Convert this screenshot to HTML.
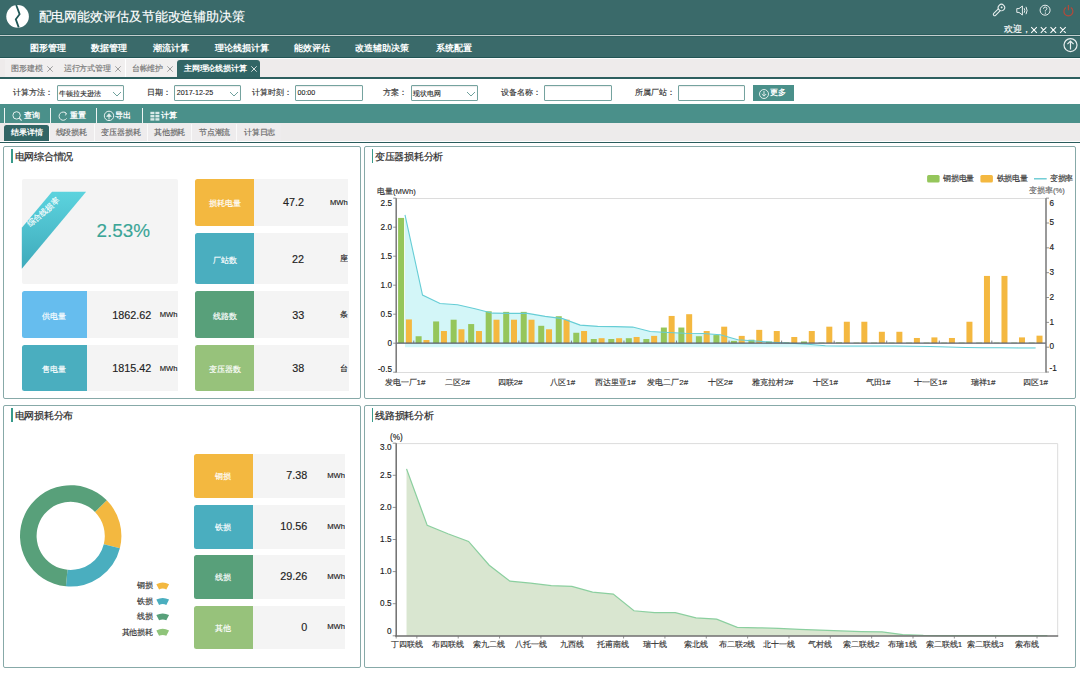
<!DOCTYPE html>
<html><head><meta charset="utf-8"><style>
html,body{margin:0;padding:0;background:#fff;}
body{width:1080px;height:675px;position:relative;overflow:hidden;font-family:'Liberation Sans',sans-serif;}
.t{position:absolute;white-space:nowrap;-webkit-text-stroke-width:0.15px;}
</style></head><body>
<div style="position:absolute;left:0;top:0;width:1080px;height:35px;background:#3a6a6a"></div>
<div style="position:absolute;left:0;top:34.3px;width:1080px;height:0.8px;background:#2a5c5c"></div>
<div style="position:absolute;left:0;top:35.1px;width:1080px;height:1.2px;background:#c4cfcf"></div>
<div style="position:absolute;left:0;top:36.3px;width:1080px;height:21.5px;background:#3a6a6a"></div>
<div style="position:absolute;left:0;top:36.3px;width:1080px;height:0.8px;background:#2f6060"></div>
<div style="position:absolute;left:0;top:56.9px;width:1080px;height:0.9px;background:#215454"></div>
<div style="position:absolute;left:0;top:57.8px;width:1080px;height:1.4px;background:#fbfbfb"></div>
<div style="position:absolute;left:0;top:59.2px;width:1080px;height:17.8px;background:#eeebeb"></div>
<div style="position:absolute;left:0;top:77px;width:1080px;height:1.5px;background:#2e5f5f"></div>
<svg style="position:absolute;left:0;top:0" width="40" height="35" viewBox="0 0 40 35">
<circle cx="17.6" cy="16.4" r="11.3" fill="#fff"/>
<path d="M16.2 5.0 L19.6 14.2 L15.8 19.3 L18.7 27.4" fill="none" stroke="#1f5757" stroke-width="1.8" stroke-linejoin="miter"/>
</svg>
<div class="t" style="left:38.5px;top:9.5px;font:13px/13px 'Liberation Sans',sans-serif;color:#fff;letter-spacing:-0.1px">配电网能效评估及节能改造辅助决策</div>

<svg style="position:absolute;left:985px;top:0" width="95" height="60" viewBox="985 0 95 60">
<g transform="translate(998.6 10.4) rotate(45)" stroke="#e4ecec" stroke-width="1.1" fill="#3a6a6a">
<path d="M-1.3 -1.6 V5.6 A1.3 1.3 0 0 0 1.3 5.6 V-1.6 Z"/>
<circle cx="0" cy="-4.0" r="3.2"/>
<circle cx="0" cy="-4.3" r="1.0" fill="#e4ecec" stroke="none"/>
</g>
<g fill="none" stroke="#e8eeee" stroke-width="1">
<path d="M1016.8 8.6 h2.2 l3.4 -2.6 v9 l-3.4 -2.6 h-2.2 z"/>
<path d="M1024.2 8.2 q1.2 2.3 0 4.6 M1026.0 6.8 q2.2 3.7 0 7.4"/>
<circle cx="1045.1" cy="10.2" r="5.0"/>
<path d="M1043.5 8.8 q0 -1.8 1.7 -1.8 q1.7 0 1.7 1.6 q0 1.2 -1.6 1.9 v1.0"/>
<circle cx="1045.3" cy="13.1" r="0.3" fill="#e8eeee"/>
<circle cx="1070.5" cy="45.1" r="6.5" stroke-width="1.2"/>
<path d="M1070.5 49.6 v-8.6 M1067.4 44.2 l3.1 -3.2 l3.1 3.2" stroke-width="1.2"/>
<path d="M1031.2 27.2 l5.6 5.6 M1036.8 27.2 l-5.6 5.6 M1040.8 27.2 l5.6 5.6 M1046.4 27.2 l-5.6 5.6 M1050.5 27.2 l5.6 5.6 M1056.1 27.2 l-5.6 5.6 M1060.1 27.2 l5.6 5.6 M1065.7 27.2 l-5.6 5.6" stroke="#fff" stroke-width="1.05"/>
</g>
<g fill="none" stroke="#b5493a" stroke-width="1.15">
<path d="M1066.0 7.6 A4.5 4.5 0 1 0 1070.8 7.6"/>
<path d="M1068.4 5.0 v5.2"/>
</g>
</svg>
<div class="t" style="left:1004px;top:25.4px;font:9px/9px 'Liberation Sans',sans-serif;color:#fff;">欢迎，</div>

<div class="t" style="left:29.5px;top:43.6px;font:bold 9px/9px 'Liberation Sans',sans-serif;color:#fff;-webkit-text-stroke-width:0;letter-spacing:0px">图形管理</div>

<div class="t" style="left:91px;top:43.6px;font:bold 9px/9px 'Liberation Sans',sans-serif;color:#fff;-webkit-text-stroke-width:0;letter-spacing:0px">数据管理</div>

<div class="t" style="left:153px;top:43.6px;font:bold 9px/9px 'Liberation Sans',sans-serif;color:#fff;-webkit-text-stroke-width:0;letter-spacing:0px">潮流计算</div>

<div class="t" style="left:214.5px;top:43.6px;font:bold 9px/9px 'Liberation Sans',sans-serif;color:#fff;-webkit-text-stroke-width:0;letter-spacing:0px">理论线损计算</div>

<div class="t" style="left:294px;top:43.6px;font:bold 9px/9px 'Liberation Sans',sans-serif;color:#fff;-webkit-text-stroke-width:0;letter-spacing:0px">能效评估</div>

<div class="t" style="left:355px;top:43.6px;font:bold 9px/9px 'Liberation Sans',sans-serif;color:#fff;-webkit-text-stroke-width:0;letter-spacing:0px">改造辅助决策</div>

<div class="t" style="left:436px;top:43.6px;font:bold 9px/9px 'Liberation Sans',sans-serif;color:#fff;-webkit-text-stroke-width:0;letter-spacing:0px">系统配置</div>

<div style="position:absolute;left:5px;top:59.2px;width:51.5px;height:17.8px;background:#f1efef;border-right:1px solid #fff"></div>
<div style="position:absolute;left:57px;top:59.2px;width:68px;height:17.8px;background:#f1efef;border-right:1px solid #fff"></div>
<div style="position:absolute;left:125.5px;top:59.2px;width:51px;height:17.8px;background:#f1efef"></div>
<div style="position:absolute;left:177px;top:60.3px;width:82.6px;height:17px;background:#316565;border-radius:3px 3px 0 0"></div>
<div class="t" style="left:11px;top:64.9px;font:8px/8px 'Liberation Sans',sans-serif;color:#777;letter-spacing:-0.15px">图形建模</div>

<svg style="position:absolute;left:47.3px;top:65.5px" width="6" height="6"><path d="M0.3 0.3 L5.7 5.7 M5.7 0.3 L0.3 5.7" stroke="#8a8a8a" stroke-width="0.8"/></svg>
<div class="t" style="left:63.8px;top:64.9px;font:8px/8px 'Liberation Sans',sans-serif;color:#777;letter-spacing:-0.15px">运行方式管理</div>

<svg style="position:absolute;left:115px;top:65.5px" width="6" height="6"><path d="M0.3 0.3 L5.7 5.7 M5.7 0.3 L0.3 5.7" stroke="#8a8a8a" stroke-width="0.8"/></svg>
<div class="t" style="left:131.8px;top:64.9px;font:8px/8px 'Liberation Sans',sans-serif;color:#777;letter-spacing:-0.15px">台帐维护</div>

<svg style="position:absolute;left:167.2px;top:65.5px" width="6" height="6"><path d="M0.3 0.3 L5.7 5.7 M5.7 0.3 L0.3 5.7" stroke="#8a8a8a" stroke-width="0.8"/></svg>
<div class="t" style="left:183.9px;top:64.9px;font:bold 8px/8px 'Liberation Sans',sans-serif;color:#fff;-webkit-text-stroke-width:0;letter-spacing:-0.15px">主网理论线损计算</div>

<svg style="position:absolute;left:250.6px;top:65.5px" width="6" height="6"><path d="M0.3 0.3 L5.7 5.7 M5.7 0.3 L0.3 5.7" stroke="#fff" stroke-width="0.8"/></svg>
<div class="t" style="left:13px;top:89.4px;font:7.9px/7.9px 'Liberation Sans',sans-serif;color:#333;">计算方法：</div>

<div style="position:absolute;left:56.5px;top:85.4px;width:65.3px;height:13.3px;border:1px solid #75a39f;border-radius:1px;background:#fff;box-shadow:inset 0 1px 1px rgba(0,0,0,0.08)"></div><div class="t" style="left:59.0px;top:89.9px;font:7px/7px 'Liberation Sans',sans-serif;color:#222;-webkit-text-stroke-width:0.1px">牛顿拉夫逊法</div>
<svg style="position:absolute;left:111.6px;top:90.6px" width="10" height="6"><path d="M1 1 L5 5 L9 1" fill="none" stroke="#5f9692" stroke-width="0.9"/></svg>
<div class="t" style="left:147px;top:89.4px;font:7.9px/7.9px 'Liberation Sans',sans-serif;color:#333;">日期：</div>

<div style="position:absolute;left:174.3px;top:85.4px;width:65.0px;height:13.3px;border:1px solid #75a39f;border-radius:1px;background:#fff;box-shadow:inset 0 1px 1px rgba(0,0,0,0.08)"></div><div class="t" style="left:176.8px;top:90.2px;font:7.1px/7.1px 'Liberation Sans',sans-serif;color:#222;-webkit-text-stroke-width:0.1px">2017-12-25</div>
<svg style="position:absolute;left:229.10000000000002px;top:90.6px" width="10" height="6"><path d="M1 1 L5 5 L9 1" fill="none" stroke="#5f9692" stroke-width="0.9"/></svg>
<div class="t" style="left:252px;top:89.4px;font:7.9px/7.9px 'Liberation Sans',sans-serif;color:#333;">计算时刻：</div>

<div style="position:absolute;left:295px;top:85.4px;width:65.5px;height:13.3px;border:1px solid #75a39f;border-radius:1px;background:#fff;box-shadow:inset 0 1px 1px rgba(0,0,0,0.08)"></div><div class="t" style="left:297.5px;top:90.2px;font:7.1px/7.1px 'Liberation Sans',sans-serif;color:#222;-webkit-text-stroke-width:0.1px">00:00</div>

<div class="t" style="left:383px;top:89.4px;font:7.9px/7.9px 'Liberation Sans',sans-serif;color:#333;">方案：</div>

<div style="position:absolute;left:410.8px;top:85.4px;width:65.19999999999999px;height:13.3px;border:1px solid #75a39f;border-radius:1px;background:#fff;box-shadow:inset 0 1px 1px rgba(0,0,0,0.08)"></div><div class="t" style="left:413.3px;top:89.9px;font:7px/7px 'Liberation Sans',sans-serif;color:#222;-webkit-text-stroke-width:0.1px">现状电网</div>
<svg style="position:absolute;left:465.8px;top:90.6px" width="10" height="6"><path d="M1 1 L5 5 L9 1" fill="none" stroke="#5f9692" stroke-width="0.9"/></svg>
<div class="t" style="left:501.3px;top:89.4px;font:7.9px/7.9px 'Liberation Sans',sans-serif;color:#333;">设备名称：</div>

<div style="position:absolute;left:544.2px;top:85.4px;width:65.79999999999995px;height:13.3px;border:1px solid #75a39f;border-radius:1px;background:#fff;box-shadow:inset 0 1px 1px rgba(0,0,0,0.08)"></div>
<div class="t" style="left:634.6px;top:89.4px;font:7.9px/7.9px 'Liberation Sans',sans-serif;color:#333;">所属厂站：</div>

<div style="position:absolute;left:678.1px;top:85.4px;width:65.29999999999995px;height:13.3px;border:1px solid #75a39f;border-radius:1px;background:#fff;box-shadow:inset 0 1px 1px rgba(0,0,0,0.08)"></div>
<div style="position:absolute;left:753.1px;top:85.4px;width:40.6px;height:15.4px;background:#4a908a"></div>
<svg style="position:absolute;left:757.7px;top:87.6px" width="12" height="12"><g fill="none" stroke="#eef5f4" stroke-width="0.9"><circle cx="6" cy="6" r="4.5"/><path d="M6 3.0 v4.8 M3.8 6.0 l2.2 2.2 l2.2 -2.2"/></g></svg>
<div class="t" style="left:769.8px;top:89.4px;font:bold 8.2px/8.2px 'Liberation Sans',sans-serif;color:#fff;-webkit-text-stroke-width:0;">更多</div>

<div style="position:absolute;left:0;top:104px;width:1080px;height:19px;background:#4a908a"></div>
<div style="position:absolute;left:4.4px;top:107.9px;width:1px;height:15px;background:#eef4f3"></div>
<div style="position:absolute;left:50.0px;top:107.9px;width:1px;height:15px;background:#eef4f3"></div>
<div style="position:absolute;left:95.9px;top:107.9px;width:1px;height:15px;background:#eef4f3"></div>
<div style="position:absolute;left:141.7px;top:107.9px;width:1px;height:15px;background:#eef4f3"></div>
<svg style="position:absolute;left:0;top:104px" width="170" height="19" viewBox="0 104 170 19"><g fill="none" stroke="#e6f0ef" stroke-width="1">
<circle cx="16.6" cy="115.4" r="3.7"/><path d="M19.3 118.2 L21.6 120.6" stroke-width="1.2"/>
<path d="M66.2 113.4 A4.1 4.1 0 1 0 66.6 118.4"/><path d="M64.6 112.3 L66.5 113.5 L65.4 115.4"/>
<circle cx="109" cy="115.9" r="4.7"/><path d="M109 119.4 v-3.6"/><path d="M106.6 116.4 L109 113.6 L111.4 116.4 Z" fill="#e6f0ef" stroke-width="0.6"/>
</g><g fill="#d8e9e7">
<rect x="150.4" y="111.8" width="4" height="2.4"/><rect x="155.4" y="111.8" width="4" height="2.4"/>
<rect x="150.4" y="115.0" width="4" height="2.4"/><rect x="155.4" y="115.0" width="4" height="2.4"/>
<rect x="150.4" y="118.2" width="4" height="2.4"/><rect x="155.4" y="118.2" width="4" height="2.4"/>
</g></svg>
<div class="t" style="left:23.8px;top:112.4px;font:bold 8.1px/8.1px 'Liberation Sans',sans-serif;color:#fff;-webkit-text-stroke-width:0;">查询</div>

<div class="t" style="left:69.5px;top:112.4px;font:bold 8.1px/8.1px 'Liberation Sans',sans-serif;color:#fff;-webkit-text-stroke-width:0;">重置</div>

<div class="t" style="left:115.2px;top:112.4px;font:bold 8.1px/8.1px 'Liberation Sans',sans-serif;color:#fff;-webkit-text-stroke-width:0;">导出</div>

<div class="t" style="left:161px;top:112.4px;font:bold 8.1px/8.1px 'Liberation Sans',sans-serif;color:#fff;-webkit-text-stroke-width:0;">计算</div>

<div style="position:absolute;left:0;top:123px;width:1080px;height:17.6px;background:#edebeb"></div>
<div style="position:absolute;left:0;top:141.5px;width:1080px;height:1.4px;background:#2a5c5c"></div>
<div style="position:absolute;left:280.3px;top:123.8px;width:1px;height:16.8px;background:#fafafa"></div>
<div style="position:absolute;left:279.3px;top:123.8px;width:1px;height:16.8px;background:#e2e0e0"></div>
<div style="position:absolute;left:4.3px;top:124.6px;width:44.5px;height:16.2px;background:#316565;border-radius:2.5px 2.5px 0 0"></div>
<div class="t" style="left:11.2px;top:128.8px;font:bold 8px/8px 'Liberation Sans',sans-serif;color:#fff;-webkit-text-stroke-width:0;letter-spacing:-0.1px">结果详情</div>

<div style="position:absolute;left:48.8px;top:123.8px;width:44.0px;height:16.8px;background:#eeeced;border-left:1px solid #fafafa"></div>
<div class="t" style="left:55.5px;top:128.8px;font:8px/8px 'Liberation Sans',sans-serif;color:#666;letter-spacing:-0.1px">线段损耗</div>

<div style="position:absolute;left:93.8px;top:123.8px;width:52.2px;height:16.8px;background:#eeeced;border-left:1px solid #fafafa"></div>
<div class="t" style="left:101.3px;top:128.8px;font:8px/8px 'Liberation Sans',sans-serif;color:#666;letter-spacing:-0.1px">变压器损耗</div>

<div style="position:absolute;left:147px;top:123.8px;width:43.30000000000001px;height:16.8px;background:#eeeced;border-left:1px solid #fafafa"></div>
<div class="t" style="left:153.8px;top:128.8px;font:8px/8px 'Liberation Sans',sans-serif;color:#666;letter-spacing:-0.1px">其他损耗</div>

<div style="position:absolute;left:191.3px;top:123.8px;width:44.0px;height:16.8px;background:#eeeced;border-left:1px solid #fafafa"></div>
<div class="t" style="left:198.8px;top:128.8px;font:8px/8px 'Liberation Sans',sans-serif;color:#666;letter-spacing:-0.1px">节点潮流</div>

<div style="position:absolute;left:236.3px;top:123.8px;width:43.5px;height:16.8px;background:#eeeced;border-left:1px solid #fafafa"></div>
<div class="t" style="left:243.8px;top:128.8px;font:8px/8px 'Liberation Sans',sans-serif;color:#666;letter-spacing:-0.1px">计算日志</div>

<div style="position:absolute;left:3.2px;top:146.4px;width:355.5px;height:250.9px;border:1.3px solid #87a9a8;border-radius:2px;background:#fff"></div>
<div style="position:absolute;left:11.100000000000001px;top:148.8px;width:1.8px;height:13.8px;background:#389a8a"></div>
<div class="t" style="left:14.600000000000001px;top:151.70000000000002px;font:10px/10px 'Liberation Sans',sans-serif;color:#2a2a2a;letter-spacing:-0.25px;-webkit-text-stroke:0.2px #2a2a2a">电网综合情况</div>

<div style="position:absolute;left:363.6px;top:146.4px;width:710.9px;height:250.9px;border:1.3px solid #87a9a8;border-radius:2px;background:#fff"></div>
<div style="position:absolute;left:371.5px;top:148.8px;width:1.8px;height:13.8px;background:#389a8a"></div>
<div class="t" style="left:375.0px;top:151.70000000000002px;font:10px/10px 'Liberation Sans',sans-serif;color:#2a2a2a;letter-spacing:-0.3px;-webkit-text-stroke:0.2px #2a2a2a">变压器损耗分析</div>

<div style="position:absolute;left:3.2px;top:405.4px;width:355.5px;height:261.09999999999997px;border:1.3px solid #87a9a8;border-radius:2px;background:#fff"></div>
<div style="position:absolute;left:11.100000000000001px;top:407.79999999999995px;width:1.8px;height:13.8px;background:#389a8a"></div>
<div class="t" style="left:14.600000000000001px;top:410.7px;font:10px/10px 'Liberation Sans',sans-serif;color:#2a2a2a;letter-spacing:-0.25px;-webkit-text-stroke:0.2px #2a2a2a">电网损耗分布</div>

<div style="position:absolute;left:363.6px;top:405.4px;width:710.9px;height:261.09999999999997px;border:1.3px solid #87a9a8;border-radius:2px;background:#fff"></div>
<div style="position:absolute;left:371.5px;top:407.79999999999995px;width:1.8px;height:13.8px;background:#389a8a"></div>
<div class="t" style="left:375.0px;top:410.7px;font:10px/10px 'Liberation Sans',sans-serif;color:#2a2a2a;letter-spacing:-0.25px;-webkit-text-stroke:0.2px #2a2a2a">线路损耗分析</div>

<div style="position:absolute;left:21.8px;top:178.5px;width:156.5px;height:105.3px;background:#f4f4f4;border-radius:2px"></div>
<svg style="position:absolute;left:0;top:0" width="360" height="400" viewBox="0 0 360 400">
<defs><linearGradient id="rg" x1="0" y1="0" x2="0" y2="1"><stop offset="0" stop-color="#5cd3de"/><stop offset="1" stop-color="#3eaabb"/></linearGradient></defs>
<path d="M52 191.7 L86.1 191.7 L21.8 268.7 L21.8 227.8 Z" fill="url(#rg)"/>
</svg>
<div class="t" style="left:23.8px;top:209.0px;font:8px/8px 'Liberation Sans',sans-serif;color:#fff;width:39px;text-align:center;transform:rotate(-41deg);transform-origin:50% 50%;-webkit-text-stroke:0.15px #fff;">综合线损率</div>

<div class="t" style="left:96.6px;top:222.3px;font:18.9px/18.9px 'Liberation Sans',sans-serif;color:#3aa597;">2.53%</div>

<div style="position:absolute;left:254px;top:178.5px;width:94.30000000000001px;height:47.0px;background:#f4f4f4;overflow:hidden"><div class="t" style="right:44.30000000000001px;top:18.9px;font:10.8px/10.8px 'Liberation Sans',sans-serif;color:#222">47.2</div><div class="t" style="left:76px;top:20.5px;font:7.6px/7.6px 'Liberation Sans',sans-serif;color:#222">MWh</div></div>
<div style="position:absolute;left:195.3px;top:178.5px;width:58.69999999999999px;height:47.0px;background:#f3b840;border-radius:2.5px 0 0 2.5px"></div>
<div class="t" style="left:195.3px;width:58.69999999999999px;text-align:center;top:200.1px;font:8px/8px 'Liberation Sans',sans-serif;color:#fff;-webkit-text-stroke:0.15px #fff">损耗电量</div>
<div style="position:absolute;left:254px;top:232.6px;width:94.30000000000001px;height:51.599999999999994px;background:#f4f4f4;overflow:hidden"><div class="t" style="right:44.30000000000001px;top:21.199999999999996px;font:10.8px/10.8px 'Liberation Sans',sans-serif;color:#222">22</div><div class="t" style="left:85.69999999999999px;top:22.799999999999997px;font:7.6px/7.6px 'Liberation Sans',sans-serif;color:#222">座</div></div>
<div style="position:absolute;left:195.3px;top:232.6px;width:58.69999999999999px;height:51.599999999999994px;background:#4aaebf;border-radius:2.5px 0 0 2.5px"></div>
<div class="t" style="left:195.3px;width:58.69999999999999px;text-align:center;top:256.5px;font:8px/8px 'Liberation Sans',sans-serif;color:#fff;-webkit-text-stroke:0.15px #fff">厂站数</div>
<div style="position:absolute;left:254px;top:291px;width:94.60000000000002px;height:46.80000000000001px;background:#f4f4f4;overflow:hidden"><div class="t" style="right:44.30000000000001px;top:18.800000000000004px;font:10.8px/10.8px 'Liberation Sans',sans-serif;color:#222">33</div><div class="t" style="left:86px;top:20.400000000000006px;font:7.6px/7.6px 'Liberation Sans',sans-serif;color:#222">条</div></div>
<div style="position:absolute;left:195.3px;top:291px;width:58.69999999999999px;height:46.80000000000001px;background:#58a07a;border-radius:2.5px 0 0 2.5px"></div>
<div class="t" style="left:195.3px;width:58.69999999999999px;text-align:center;top:312.5px;font:8px/8px 'Liberation Sans',sans-serif;color:#fff;-webkit-text-stroke:0.15px #fff">线路数</div>
<div style="position:absolute;left:254px;top:344.6px;width:94.60000000000002px;height:46.299999999999955px;background:#f4f4f4;overflow:hidden"><div class="t" style="right:44.30000000000001px;top:18.549999999999976px;font:10.8px/10.8px 'Liberation Sans',sans-serif;color:#222">38</div><div class="t" style="left:86px;top:20.149999999999977px;font:7.6px/7.6px 'Liberation Sans',sans-serif;color:#222">台</div></div>
<div style="position:absolute;left:195.3px;top:344.6px;width:58.69999999999999px;height:46.299999999999955px;background:#97c27b;border-radius:2.5px 0 0 2.5px"></div>
<div class="t" style="left:195.3px;width:58.69999999999999px;text-align:center;top:365.85px;font:8px/8px 'Liberation Sans',sans-serif;color:#fff;-webkit-text-stroke:0.15px #fff">变压器数</div>
<div style="position:absolute;left:86.9px;top:291px;width:91.5px;height:46.80000000000001px;background:#f4f4f4;overflow:hidden"><div class="t" style="right:27.200000000000017px;top:18.800000000000004px;font:10.8px/10.8px 'Liberation Sans',sans-serif;color:#222">1862.62</div><div class="t" style="left:72.9px;top:20.400000000000006px;font:7.6px/7.6px 'Liberation Sans',sans-serif;color:#222">MWh</div></div>
<div style="position:absolute;left:21.8px;top:291px;width:65.10000000000001px;height:46.80000000000001px;background:#66bdee;border-radius:2.5px 0 0 2.5px"></div>
<div class="t" style="left:21.8px;width:65.10000000000001px;text-align:center;top:312.5px;font:8px/8px 'Liberation Sans',sans-serif;color:#fff;-webkit-text-stroke:0.15px #fff">供电量</div>
<div style="position:absolute;left:86.9px;top:344.6px;width:91.5px;height:46.299999999999955px;background:#f4f4f4;overflow:hidden"><div class="t" style="right:27.200000000000017px;top:18.549999999999976px;font:10.8px/10.8px 'Liberation Sans',sans-serif;color:#222">1815.42</div><div class="t" style="left:72.9px;top:20.149999999999977px;font:7.6px/7.6px 'Liberation Sans',sans-serif;color:#222">MWh</div></div>
<div style="position:absolute;left:21.8px;top:344.6px;width:65.10000000000001px;height:46.299999999999955px;background:#4aaebf;border-radius:2.5px 0 0 2.5px"></div>
<div class="t" style="left:21.8px;width:65.10000000000001px;text-align:center;top:365.85px;font:8px/8px 'Liberation Sans',sans-serif;color:#fff;-webkit-text-stroke:0.15px #fff">售电量</div>
<div style="position:absolute;left:252.8px;top:454.3px;width:92.69999999999999px;height:43.5px;background:#f4f4f4;overflow:hidden"><div class="t" style="right:38.19999999999999px;top:16.15px;font:10.8px/10.8px 'Liberation Sans',sans-serif;color:#222">7.38</div><div class="t" style="left:74.5px;top:17.75px;font:7.6px/7.6px 'Liberation Sans',sans-serif;color:#222">MWh</div></div>
<div style="position:absolute;left:193.5px;top:454.3px;width:59.30000000000001px;height:43.5px;background:#f3b840;border-radius:2.5px 0 0 2.5px"></div>
<div class="t" style="left:193.5px;width:59.30000000000001px;text-align:center;top:473.15000000000003px;font:8px/8px 'Liberation Sans',sans-serif;color:#fff;-webkit-text-stroke:0.15px #fff">铜损</div>
<div style="position:absolute;left:252.8px;top:504.8px;width:92.69999999999999px;height:43.80000000000001px;background:#f4f4f4;overflow:hidden"><div class="t" style="right:38.19999999999999px;top:16.300000000000004px;font:10.8px/10.8px 'Liberation Sans',sans-serif;color:#222">10.56</div><div class="t" style="left:74.5px;top:17.900000000000006px;font:7.6px/7.6px 'Liberation Sans',sans-serif;color:#222">MWh</div></div>
<div style="position:absolute;left:193.5px;top:504.8px;width:59.30000000000001px;height:43.80000000000001px;background:#4aaebf;border-radius:2.5px 0 0 2.5px"></div>
<div class="t" style="left:193.5px;width:59.30000000000001px;text-align:center;top:523.8000000000001px;font:8px/8px 'Liberation Sans',sans-serif;color:#fff;-webkit-text-stroke:0.15px #fff">铁损</div>
<div style="position:absolute;left:252.8px;top:555.4px;width:92.69999999999999px;height:43.39999999999998px;background:#f4f4f4;overflow:hidden"><div class="t" style="right:38.19999999999999px;top:16.099999999999987px;font:10.8px/10.8px 'Liberation Sans',sans-serif;color:#222">29.26</div><div class="t" style="left:74.5px;top:17.69999999999999px;font:7.6px/7.6px 'Liberation Sans',sans-serif;color:#222">MWh</div></div>
<div style="position:absolute;left:193.5px;top:555.4px;width:59.30000000000001px;height:43.39999999999998px;background:#58a07a;border-radius:2.5px 0 0 2.5px"></div>
<div class="t" style="left:193.5px;width:59.30000000000001px;text-align:center;top:574.1999999999999px;font:8px/8px 'Liberation Sans',sans-serif;color:#fff;-webkit-text-stroke:0.15px #fff">线损</div>
<div style="position:absolute;left:252.8px;top:605.6px;width:92.69999999999999px;height:43.60000000000002px;background:#f4f4f4;overflow:hidden"><div class="t" style="right:38.19999999999999px;top:16.20000000000001px;font:10.8px/10.8px 'Liberation Sans',sans-serif;color:#222">0</div><div class="t" style="left:74.5px;top:17.80000000000001px;font:7.6px/7.6px 'Liberation Sans',sans-serif;color:#222">MWh</div></div>
<div style="position:absolute;left:193.5px;top:605.6px;width:59.30000000000001px;height:43.60000000000002px;background:#97c27b;border-radius:2.5px 0 0 2.5px"></div>
<div class="t" style="left:193.5px;width:59.30000000000001px;text-align:center;top:624.5000000000001px;font:8px/8px 'Liberation Sans',sans-serif;color:#fff;-webkit-text-stroke:0.15px #fff">其他</div>
<svg style="position:absolute;left:0;top:400px" width="360" height="275" viewBox="0 400 360 275"><path d="M106.80 500.30 A50.7 50.7 0 0 1 119.89 548.17 L103.79 544.15 A34.1 34.1 0 0 0 94.98 511.96 Z" fill="#f3b840"/><path d="M119.89 548.17 A50.7 50.7 0 0 1 65.93 586.37 L67.49 569.85 A34.1 34.1 0 0 0 103.79 544.15 Z" fill="#4aaebf"/><path d="M65.93 586.37 A50.7 50.7 0 1 1 106.80 500.30 L94.98 511.96 A34.1 34.1 0 1 0 67.49 569.85 Z" fill="#58a07a"/><path d="M156.34 584.13 A14 14 0 0 1 169.06 584.13 L166.33 589.47 A8 8 0 0 0 159.07 589.47 Z" fill="#f3b840"/><path d="M156.34 599.58 A14 14 0 0 1 169.06 599.58 L166.33 604.9200000000001 A8 8 0 0 0 159.07 604.9200000000001 Z" fill="#4aaebf"/><path d="M156.34 615.03 A14 14 0 0 1 169.06 615.03 L166.33 620.37 A8 8 0 0 0 159.07 620.37 Z" fill="#58a07a"/><path d="M156.34 630.48 A14 14 0 0 1 169.06 630.48 L166.33 635.82 A8 8 0 0 0 159.07 635.82 Z" fill="#8fc47a"/></svg>
<div class="t" style="right:927.2px;top:582.3px;font:8px/8px 'Liberation Sans',sans-serif;color:#333;letter-spacing:-0.2px">铜损</div>
<div class="t" style="right:927.2px;top:597.6999999999999px;font:8px/8px 'Liberation Sans',sans-serif;color:#333;letter-spacing:-0.2px">铁损</div>
<div class="t" style="right:927.2px;top:613.0999999999999px;font:8px/8px 'Liberation Sans',sans-serif;color:#333;letter-spacing:-0.2px">线损</div>
<div class="t" style="right:927.2px;top:628.5px;font:8px/8px 'Liberation Sans',sans-serif;color:#333;letter-spacing:-0.2px">其他损耗</div>
<svg style="position:absolute;left:0;top:0" width="1080" height="400" viewBox="0 0 1080 400"><line x1="396.2" y1="198.5" x2="1046.0" y2="198.5" stroke="#dcdcdc" stroke-width="1"/><line x1="396.2" y1="372.5" x2="1046.0" y2="372.5" stroke="#dcdcdc" stroke-width="1"/><polygon points="405.00,347.20 405.00,214.80 422.52,295.04 440.03,303.48 457.55,304.72 475.07,308.70 492.58,313.17 510.10,313.42 527.62,313.42 545.13,316.40 562.65,318.63 580.17,325.09 597.69,326.33 615.20,326.58 632.72,327.08 650.24,331.55 667.75,332.54 685.27,333.29 702.79,333.54 720.30,334.78 737.82,339.75 755.34,340.99 772.86,342.23 790.37,343.23 807.89,344.22 825.41,345.71 842.92,345.96 860.44,345.96 877.96,345.96 895.47,345.96 912.99,346.21 930.51,346.45 948.03,346.95 965.54,347.45 983.06,347.70 1000.58,347.70 1018.09,347.95 1035.61,348.07 1035.61,347.20" fill="#d3f6f8"/><rect x="398.10" y="217.92" width="6" height="125.28" fill="#95c65b"/><rect x="405.90" y="319.42" width="6" height="23.78" fill="#f4b840"/><rect x="415.62" y="336.24" width="6" height="6.96" fill="#95c65b"/><rect x="423.42" y="340.01" width="6" height="3.19" fill="#f4b840"/><rect x="433.13" y="321.45" width="6" height="21.75" fill="#95c65b"/><rect x="440.93" y="331.02" width="6" height="12.18" fill="#f4b840"/><rect x="450.65" y="319.71" width="6" height="23.49" fill="#95c65b"/><rect x="458.45" y="329.28" width="6" height="13.92" fill="#f4b840"/><rect x="468.17" y="324.06" width="6" height="19.14" fill="#95c65b"/><rect x="475.97" y="331.02" width="6" height="12.18" fill="#f4b840"/><rect x="485.68" y="311.30" width="6" height="31.90" fill="#95c65b"/><rect x="493.48" y="319.71" width="6" height="23.49" fill="#f4b840"/><rect x="503.20" y="311.88" width="6" height="31.32" fill="#95c65b"/><rect x="511.00" y="319.71" width="6" height="23.49" fill="#f4b840"/><rect x="520.72" y="311.88" width="6" height="31.32" fill="#95c65b"/><rect x="528.52" y="319.71" width="6" height="23.49" fill="#f4b840"/><rect x="538.23" y="325.80" width="6" height="17.40" fill="#95c65b"/><rect x="546.03" y="329.28" width="6" height="13.92" fill="#f4b840"/><rect x="555.75" y="316.23" width="6" height="26.97" fill="#95c65b"/><rect x="563.55" y="319.71" width="6" height="23.49" fill="#f4b840"/><rect x="573.27" y="332.76" width="6" height="10.44" fill="#95c65b"/><rect x="581.07" y="331.02" width="6" height="12.18" fill="#f4b840"/><rect x="590.79" y="339.02" width="6" height="4.18" fill="#95c65b"/><rect x="598.59" y="338.21" width="6" height="4.99" fill="#f4b840"/><rect x="608.30" y="339.02" width="6" height="4.18" fill="#95c65b"/><rect x="616.10" y="338.21" width="6" height="4.99" fill="#f4b840"/><rect x="625.82" y="338.21" width="6" height="4.99" fill="#95c65b"/><rect x="633.62" y="336.99" width="6" height="6.21" fill="#f4b840"/><rect x="643.34" y="339.02" width="6" height="4.18" fill="#95c65b"/><rect x="651.14" y="335.89" width="6" height="7.31" fill="#f4b840"/><rect x="660.85" y="327.54" width="6" height="15.66" fill="#95c65b"/><rect x="668.65" y="315.94" width="6" height="27.26" fill="#f4b840"/><rect x="678.37" y="327.54" width="6" height="15.66" fill="#95c65b"/><rect x="686.17" y="314.20" width="6" height="29.00" fill="#f4b840"/><rect x="695.89" y="336.24" width="6" height="6.96" fill="#95c65b"/><rect x="703.69" y="331.02" width="6" height="12.18" fill="#f4b840"/><rect x="713.40" y="335.08" width="6" height="8.12" fill="#95c65b"/><rect x="721.20" y="326.67" width="6" height="16.53" fill="#f4b840"/><rect x="730.92" y="340.88" width="6" height="2.32" fill="#95c65b"/><rect x="738.72" y="335.89" width="6" height="7.31" fill="#f4b840"/><rect x="748.44" y="339.72" width="6" height="3.48" fill="#95c65b"/><rect x="756.24" y="329.86" width="6" height="13.34" fill="#f4b840"/><rect x="765.96" y="341.46" width="6" height="1.74" fill="#95c65b"/><rect x="773.76" y="331.02" width="6" height="12.18" fill="#f4b840"/><rect x="783.47" y="342.33" width="6" height="0.87" fill="#95c65b"/><rect x="791.27" y="336.99" width="6" height="6.21" fill="#f4b840"/><rect x="800.99" y="341.46" width="6" height="1.74" fill="#95c65b"/><rect x="808.79" y="331.02" width="6" height="12.18" fill="#f4b840"/><rect x="818.51" y="342.62" width="6" height="0.58" fill="#95c65b"/><rect x="826.31" y="326.67" width="6" height="16.53" fill="#f4b840"/><rect x="836.02" y="342.33" width="6" height="0.87" fill="#95c65b"/><rect x="843.82" y="321.74" width="6" height="21.46" fill="#f4b840"/><rect x="853.54" y="342.62" width="6" height="0.58" fill="#95c65b"/><rect x="861.34" y="321.74" width="6" height="21.46" fill="#f4b840"/><rect x="871.06" y="342.62" width="6" height="0.58" fill="#95c65b"/><rect x="878.86" y="331.77" width="6" height="11.43" fill="#f4b840"/><rect x="888.57" y="342.62" width="6" height="0.58" fill="#95c65b"/><rect x="896.37" y="331.77" width="6" height="11.43" fill="#f4b840"/><rect x="906.09" y="342.62" width="6" height="0.58" fill="#95c65b"/><rect x="913.89" y="337.98" width="6" height="5.22" fill="#f4b840"/><rect x="923.61" y="342.62" width="6" height="0.58" fill="#95c65b"/><rect x="931.41" y="337.40" width="6" height="5.80" fill="#f4b840"/><rect x="941.13" y="342.62" width="6" height="0.58" fill="#95c65b"/><rect x="948.93" y="337.98" width="6" height="5.22" fill="#f4b840"/><rect x="958.64" y="342.62" width="6" height="0.58" fill="#95c65b"/><rect x="966.44" y="321.74" width="6" height="21.46" fill="#f4b840"/><rect x="976.16" y="342.62" width="6" height="0.58" fill="#95c65b"/><rect x="983.96" y="275.92" width="6" height="67.28" fill="#f4b840"/><rect x="993.68" y="342.62" width="6" height="0.58" fill="#95c65b"/><rect x="1001.48" y="275.92" width="6" height="67.28" fill="#f4b840"/><rect x="1011.19" y="342.62" width="6" height="0.58" fill="#95c65b"/><rect x="1018.99" y="337.40" width="6" height="5.80" fill="#f4b840"/><rect x="1028.71" y="342.62" width="6" height="0.58" fill="#95c65b"/><rect x="1036.51" y="335.66" width="6" height="7.54" fill="#f4b840"/><polyline points="405.00,214.80 422.52,295.04 440.03,303.48 457.55,304.72 475.07,308.70 492.58,313.17 510.10,313.42 527.62,313.42 545.13,316.40 562.65,318.63 580.17,325.09 597.69,326.33 615.20,326.58 632.72,327.08 650.24,331.55 667.75,332.54 685.27,333.29 702.79,333.54 720.30,334.78 737.82,339.75 755.34,340.99 772.86,342.23 790.37,343.23 807.89,344.22 825.41,345.71 842.92,345.96 860.44,345.96 877.96,345.96 895.47,345.96 912.99,346.21 930.51,346.45 948.03,346.95 965.54,347.45 983.06,347.70 1000.58,347.70 1018.09,347.95 1035.61,348.07" fill="none" stroke="#66cdd5" stroke-width="1.1"/><line x1="396.2" y1="343.1" x2="1046.0" y2="343.1" stroke="#585e6e" stroke-width="1.2"/><line x1="413.76" y1="340.6" x2="413.76" y2="343.1" stroke="#666" stroke-width="0.8"/><line x1="466.31" y1="340.6" x2="466.31" y2="343.1" stroke="#666" stroke-width="0.8"/><line x1="518.86" y1="340.6" x2="518.86" y2="343.1" stroke="#666" stroke-width="0.8"/><line x1="571.41" y1="340.6" x2="571.41" y2="343.1" stroke="#666" stroke-width="0.8"/><line x1="623.96" y1="340.6" x2="623.96" y2="343.1" stroke="#666" stroke-width="0.8"/><line x1="676.51" y1="340.6" x2="676.51" y2="343.1" stroke="#666" stroke-width="0.8"/><line x1="729.06" y1="340.6" x2="729.06" y2="343.1" stroke="#666" stroke-width="0.8"/><line x1="781.61" y1="340.6" x2="781.61" y2="343.1" stroke="#666" stroke-width="0.8"/><line x1="834.16" y1="340.6" x2="834.16" y2="343.1" stroke="#666" stroke-width="0.8"/><line x1="886.72" y1="340.6" x2="886.72" y2="343.1" stroke="#666" stroke-width="0.8"/><line x1="939.27" y1="340.6" x2="939.27" y2="343.1" stroke="#666" stroke-width="0.8"/><line x1="991.82" y1="340.6" x2="991.82" y2="343.1" stroke="#666" stroke-width="0.8"/><line x1="396.2" y1="198.2" x2="396.2" y2="372.4" stroke="#777" stroke-width="1.5"/><line x1="1046.0" y1="198.2" x2="1046.0" y2="372.4" stroke="#777" stroke-width="1.5"/><line x1="393.2" y1="198.20" x2="396.2" y2="198.20" stroke="#777" stroke-width="0.8"/><line x1="393.2" y1="227.20" x2="396.2" y2="227.20" stroke="#777" stroke-width="0.8"/><line x1="393.2" y1="256.20" x2="396.2" y2="256.20" stroke="#777" stroke-width="0.8"/><line x1="393.2" y1="285.20" x2="396.2" y2="285.20" stroke="#777" stroke-width="0.8"/><line x1="393.2" y1="314.20" x2="396.2" y2="314.20" stroke="#777" stroke-width="0.8"/><line x1="393.2" y1="343.20" x2="396.2" y2="343.20" stroke="#777" stroke-width="0.8"/><line x1="393.2" y1="372.20" x2="396.2" y2="372.20" stroke="#777" stroke-width="0.8"/><line x1="1046.0" y1="198.16" x2="1049.0" y2="198.16" stroke="#777" stroke-width="0.8"/><line x1="1046.0" y1="223.00" x2="1049.0" y2="223.00" stroke="#777" stroke-width="0.8"/><line x1="1046.0" y1="247.84" x2="1049.0" y2="247.84" stroke="#777" stroke-width="0.8"/><line x1="1046.0" y1="272.68" x2="1049.0" y2="272.68" stroke="#777" stroke-width="0.8"/><line x1="1046.0" y1="297.52" x2="1049.0" y2="297.52" stroke="#777" stroke-width="0.8"/><line x1="1046.0" y1="322.36" x2="1049.0" y2="322.36" stroke="#777" stroke-width="0.8"/><line x1="1046.0" y1="347.20" x2="1049.0" y2="347.20" stroke="#777" stroke-width="0.8"/><line x1="1046.0" y1="372.04" x2="1049.0" y2="372.04" stroke="#777" stroke-width="0.8"/><rect x="927.1" y="175.1" width="12.5" height="7.4" rx="1.5" fill="#95c65b"/><rect x="980.4" y="175.1" width="12.5" height="7.4" rx="1.5" fill="#f4b840"/><line x1="1034" y1="178.8" x2="1046.7" y2="178.8" stroke="#5cc6cf" stroke-width="1.3"/></svg>
<div class="t" style="right:688px;top:199.70px;font:8.2px/8.2px 'Liberation Sans',sans-serif;color:#222">2.5</div>
<div class="t" style="right:688px;top:223.90px;font:8.2px/8.2px 'Liberation Sans',sans-serif;color:#222">2.0</div>
<div class="t" style="right:688px;top:252.90px;font:8.2px/8.2px 'Liberation Sans',sans-serif;color:#222">1.5</div>
<div class="t" style="right:688px;top:281.90px;font:8.2px/8.2px 'Liberation Sans',sans-serif;color:#222">1.0</div>
<div class="t" style="right:688px;top:310.90px;font:8.2px/8.2px 'Liberation Sans',sans-serif;color:#222">0.5</div>
<div class="t" style="right:688px;top:339.90px;font:8.2px/8.2px 'Liberation Sans',sans-serif;color:#222">0</div>
<div class="t" style="right:688px;top:365.90px;font:8.2px/8.2px 'Liberation Sans',sans-serif;color:#222">-0.5</div>
<div class="t" style="left:1049.6px;top:199.66px;font:8.2px/8.2px 'Liberation Sans',sans-serif;color:#222">6</div>
<div class="t" style="left:1049.6px;top:219.20px;font:8.2px/8.2px 'Liberation Sans',sans-serif;color:#222">5</div>
<div class="t" style="left:1049.6px;top:244.04px;font:8.2px/8.2px 'Liberation Sans',sans-serif;color:#222">4</div>
<div class="t" style="left:1049.6px;top:268.88px;font:8.2px/8.2px 'Liberation Sans',sans-serif;color:#222">3</div>
<div class="t" style="left:1049.6px;top:293.72px;font:8.2px/8.2px 'Liberation Sans',sans-serif;color:#222">2</div>
<div class="t" style="left:1049.6px;top:318.56px;font:8.2px/8.2px 'Liberation Sans',sans-serif;color:#222">1</div>
<div class="t" style="left:1049.6px;top:343.40px;font:8.2px/8.2px 'Liberation Sans',sans-serif;color:#222">0</div>
<div class="t" style="left:1049.6px;top:365.24px;font:8.2px/8.2px 'Liberation Sans',sans-serif;color:#222">-1</div>
<div class="t" style="left:377px;top:187.6px;font:7.6px/7.6px 'Liberation Sans',sans-serif;color:#333;">电量(MWh)</div>

<div class="t" style="left:1028.9px;top:187.2px;font:7.6px/7.6px 'Liberation Sans',sans-serif;color:#666;">变损率(%)</div>

<div class="t" style="left:943.4px;top:175.4px;font:8px/8px 'Liberation Sans',sans-serif;color:#333;letter-spacing:-0.3px">铜损电量</div>

<div class="t" style="left:996.7px;top:175.4px;font:8px/8px 'Liberation Sans',sans-serif;color:#333;letter-spacing:-0.3px">铁损电量</div>

<div class="t" style="left:1050px;top:175.4px;font:8px/8px 'Liberation Sans',sans-serif;color:#333;letter-spacing:-0.3px">变损率</div>

<div class="t" style="left:365.00px;width:80px;text-align:center;top:379.0px;font:8px/8px 'Liberation Sans',sans-serif;color:#333">发电一厂1#</div>
<div class="t" style="left:417.55px;width:80px;text-align:center;top:379.0px;font:8px/8px 'Liberation Sans',sans-serif;color:#333">二区2#</div>
<div class="t" style="left:470.10px;width:80px;text-align:center;top:379.0px;font:8px/8px 'Liberation Sans',sans-serif;color:#333">四联2#</div>
<div class="t" style="left:522.65px;width:80px;text-align:center;top:379.0px;font:8px/8px 'Liberation Sans',sans-serif;color:#333">八区1#</div>
<div class="t" style="left:575.20px;width:80px;text-align:center;top:379.0px;font:8px/8px 'Liberation Sans',sans-serif;color:#333">西达里亚1#</div>
<div class="t" style="left:627.75px;width:80px;text-align:center;top:379.0px;font:8px/8px 'Liberation Sans',sans-serif;color:#333">发电二厂2#</div>
<div class="t" style="left:680.30px;width:80px;text-align:center;top:379.0px;font:8px/8px 'Liberation Sans',sans-serif;color:#333">十区2#</div>
<div class="t" style="left:732.86px;width:80px;text-align:center;top:379.0px;font:8px/8px 'Liberation Sans',sans-serif;color:#333">雅克拉村2#</div>
<div class="t" style="left:785.41px;width:80px;text-align:center;top:379.0px;font:8px/8px 'Liberation Sans',sans-serif;color:#333">十区1#</div>
<div class="t" style="left:837.96px;width:80px;text-align:center;top:379.0px;font:8px/8px 'Liberation Sans',sans-serif;color:#333">气田1#</div>
<div class="t" style="left:890.51px;width:80px;text-align:center;top:379.0px;font:8px/8px 'Liberation Sans',sans-serif;color:#333">十一区1#</div>
<div class="t" style="left:943.06px;width:80px;text-align:center;top:379.0px;font:8px/8px 'Liberation Sans',sans-serif;color:#333">瑞祥1#</div>
<div class="t" style="left:995.61px;width:80px;text-align:center;top:379.0px;font:8px/8px 'Liberation Sans',sans-serif;color:#333">四区1#</div>
<svg style="position:absolute;left:0;top:400px" width="1080" height="275" viewBox="0 400 1080 275"><path d="M396.2 443.6 H1057.7 V635.8" fill="none" stroke="#dcdcdc" stroke-width="1"/><polygon points="406.54,635.80 406.54,468.88 427.21,525.38 447.88,533.72 468.55,541.43 489.22,565.18 509.90,581.23 530.57,583.16 551.24,585.72 571.91,586.37 592.58,592.14 613.25,594.07 633.93,610.76 654.60,612.69 675.27,612.69 695.94,617.82 716.61,619.11 737.29,627.45 757.96,627.77 778.63,628.42 799.30,629.38 819.97,630.02 840.65,630.98 861.32,631.63 881.99,631.95 902.66,634.52 923.33,635.48 944.00,635.54 964.68,635.54 985.35,635.61 1006.02,635.61 1026.69,635.61 1047.36,635.61 1047.36,635.80" fill="#d9e6d0"/><polyline points="406.54,468.88 427.21,525.38 447.88,533.72 468.55,541.43 489.22,565.18 509.90,581.23 530.57,583.16 551.24,585.72 571.91,586.37 592.58,592.14 613.25,594.07 633.93,610.76 654.60,612.69 675.27,612.69 695.94,617.82 716.61,619.11 737.29,627.45 757.96,627.77 778.63,628.42 799.30,629.38 819.97,630.02 840.65,630.98 861.32,631.63 881.99,631.95 902.66,634.52 923.33,635.48 944.00,635.54 964.68,635.54 985.35,635.61 1006.02,635.61 1026.69,635.61 1047.36,635.61" fill="none" stroke="#8bcf9f" stroke-width="1.25"/><line x1="395.2" y1="636.0" x2="1058.2" y2="636.0" stroke="#6e6e6e" stroke-width="1.5"/><line x1="396.2" y1="443.2" x2="396.2" y2="636.5" stroke="#6e6e6e" stroke-width="1.5"/><line x1="416.87" y1="636" x2="416.87" y2="638.5" stroke="#777" stroke-width="0.8"/><line x1="458.22" y1="636" x2="458.22" y2="638.5" stroke="#777" stroke-width="0.8"/><line x1="499.56" y1="636" x2="499.56" y2="638.5" stroke="#777" stroke-width="0.8"/><line x1="540.90" y1="636" x2="540.90" y2="638.5" stroke="#777" stroke-width="0.8"/><line x1="582.25" y1="636" x2="582.25" y2="638.5" stroke="#777" stroke-width="0.8"/><line x1="623.59" y1="636" x2="623.59" y2="638.5" stroke="#777" stroke-width="0.8"/><line x1="664.93" y1="636" x2="664.93" y2="638.5" stroke="#777" stroke-width="0.8"/><line x1="706.28" y1="636" x2="706.28" y2="638.5" stroke="#777" stroke-width="0.8"/><line x1="747.62" y1="636" x2="747.62" y2="638.5" stroke="#777" stroke-width="0.8"/><line x1="788.97" y1="636" x2="788.97" y2="638.5" stroke="#777" stroke-width="0.8"/><line x1="830.31" y1="636" x2="830.31" y2="638.5" stroke="#777" stroke-width="0.8"/><line x1="871.65" y1="636" x2="871.65" y2="638.5" stroke="#777" stroke-width="0.8"/><line x1="913.00" y1="636" x2="913.00" y2="638.5" stroke="#777" stroke-width="0.8"/><line x1="954.34" y1="636" x2="954.34" y2="638.5" stroke="#777" stroke-width="0.8"/><line x1="995.68" y1="636" x2="995.68" y2="638.5" stroke="#777" stroke-width="0.8"/><line x1="1037.03" y1="636" x2="1037.03" y2="638.5" stroke="#777" stroke-width="0.8"/><line x1="396.2" y1="636" x2="396.2" y2="638.5" stroke="#777" stroke-width="0.8"/><line x1="392.7" y1="443.20" x2="396.2" y2="443.20" stroke="#777" stroke-width="0.8"/><line x1="392.7" y1="475.30" x2="396.2" y2="475.30" stroke="#777" stroke-width="0.8"/><line x1="392.7" y1="507.40" x2="396.2" y2="507.40" stroke="#777" stroke-width="0.8"/><line x1="392.7" y1="539.50" x2="396.2" y2="539.50" stroke="#777" stroke-width="0.8"/><line x1="392.7" y1="571.60" x2="396.2" y2="571.60" stroke="#777" stroke-width="0.8"/><line x1="392.7" y1="603.70" x2="396.2" y2="603.70" stroke="#777" stroke-width="0.8"/><line x1="392.7" y1="635.80" x2="396.2" y2="635.80" stroke="#777" stroke-width="0.8"/></svg>
<div class="t" style="right:688.5px;top:444.40px;font:8.2px/8.2px 'Liberation Sans',sans-serif;color:#222">3.0</div>
<div class="t" style="right:688.5px;top:472.00px;font:8.2px/8.2px 'Liberation Sans',sans-serif;color:#222">2.5</div>
<div class="t" style="right:688.5px;top:504.10px;font:8.2px/8.2px 'Liberation Sans',sans-serif;color:#222">2.0</div>
<div class="t" style="right:688.5px;top:536.20px;font:8.2px/8.2px 'Liberation Sans',sans-serif;color:#222">1.5</div>
<div class="t" style="right:688.5px;top:568.30px;font:8.2px/8.2px 'Liberation Sans',sans-serif;color:#222">1.0</div>
<div class="t" style="right:688.5px;top:600.40px;font:8.2px/8.2px 'Liberation Sans',sans-serif;color:#222">0.5</div>
<div class="t" style="right:688.5px;top:627.60px;font:8.2px/8.2px 'Liberation Sans',sans-serif;color:#222">0</div>
<div class="t" style="left:390px;top:433.6px;font:8.2px/8.2px 'Liberation Sans',sans-serif;color:#222;">(%)</div>

<div class="t" style="left:366.54px;width:80px;text-align:center;top:641.0px;font:8px/8px 'Liberation Sans',sans-serif;color:#333">丁四联线</div>
<div class="t" style="left:407.88px;width:80px;text-align:center;top:641.0px;font:8px/8px 'Liberation Sans',sans-serif;color:#333">布四联线</div>
<div class="t" style="left:449.22px;width:80px;text-align:center;top:641.0px;font:8px/8px 'Liberation Sans',sans-serif;color:#333">索九二线</div>
<div class="t" style="left:490.57px;width:80px;text-align:center;top:641.0px;font:8px/8px 'Liberation Sans',sans-serif;color:#333">八托一线</div>
<div class="t" style="left:531.91px;width:80px;text-align:center;top:641.0px;font:8px/8px 'Liberation Sans',sans-serif;color:#333">九西线</div>
<div class="t" style="left:573.25px;width:80px;text-align:center;top:641.0px;font:8px/8px 'Liberation Sans',sans-serif;color:#333">托甫南线</div>
<div class="t" style="left:614.60px;width:80px;text-align:center;top:641.0px;font:8px/8px 'Liberation Sans',sans-serif;color:#333">瑞十线</div>
<div class="t" style="left:655.94px;width:80px;text-align:center;top:641.0px;font:8px/8px 'Liberation Sans',sans-serif;color:#333">索北线</div>
<div class="t" style="left:697.29px;width:80px;text-align:center;top:641.0px;font:8px/8px 'Liberation Sans',sans-serif;color:#333">布二联2线</div>
<div class="t" style="left:738.63px;width:80px;text-align:center;top:641.0px;font:8px/8px 'Liberation Sans',sans-serif;color:#333">北十一线</div>
<div class="t" style="left:779.97px;width:80px;text-align:center;top:641.0px;font:8px/8px 'Liberation Sans',sans-serif;color:#333">气村线</div>
<div class="t" style="left:821.32px;width:80px;text-align:center;top:641.0px;font:8px/8px 'Liberation Sans',sans-serif;color:#333">索二联线2</div>
<div class="t" style="left:862.66px;width:80px;text-align:center;top:641.0px;font:8px/8px 'Liberation Sans',sans-serif;color:#333">布瑞1线</div>
<div class="t" style="left:904.00px;width:80px;text-align:center;top:641.0px;font:8px/8px 'Liberation Sans',sans-serif;color:#333">索二联线1</div>
<div class="t" style="left:945.35px;width:80px;text-align:center;top:641.0px;font:8px/8px 'Liberation Sans',sans-serif;color:#333">索二联线3</div>
<div class="t" style="left:986.69px;width:80px;text-align:center;top:641.0px;font:8px/8px 'Liberation Sans',sans-serif;color:#333">索布线</div>
</body></html>
